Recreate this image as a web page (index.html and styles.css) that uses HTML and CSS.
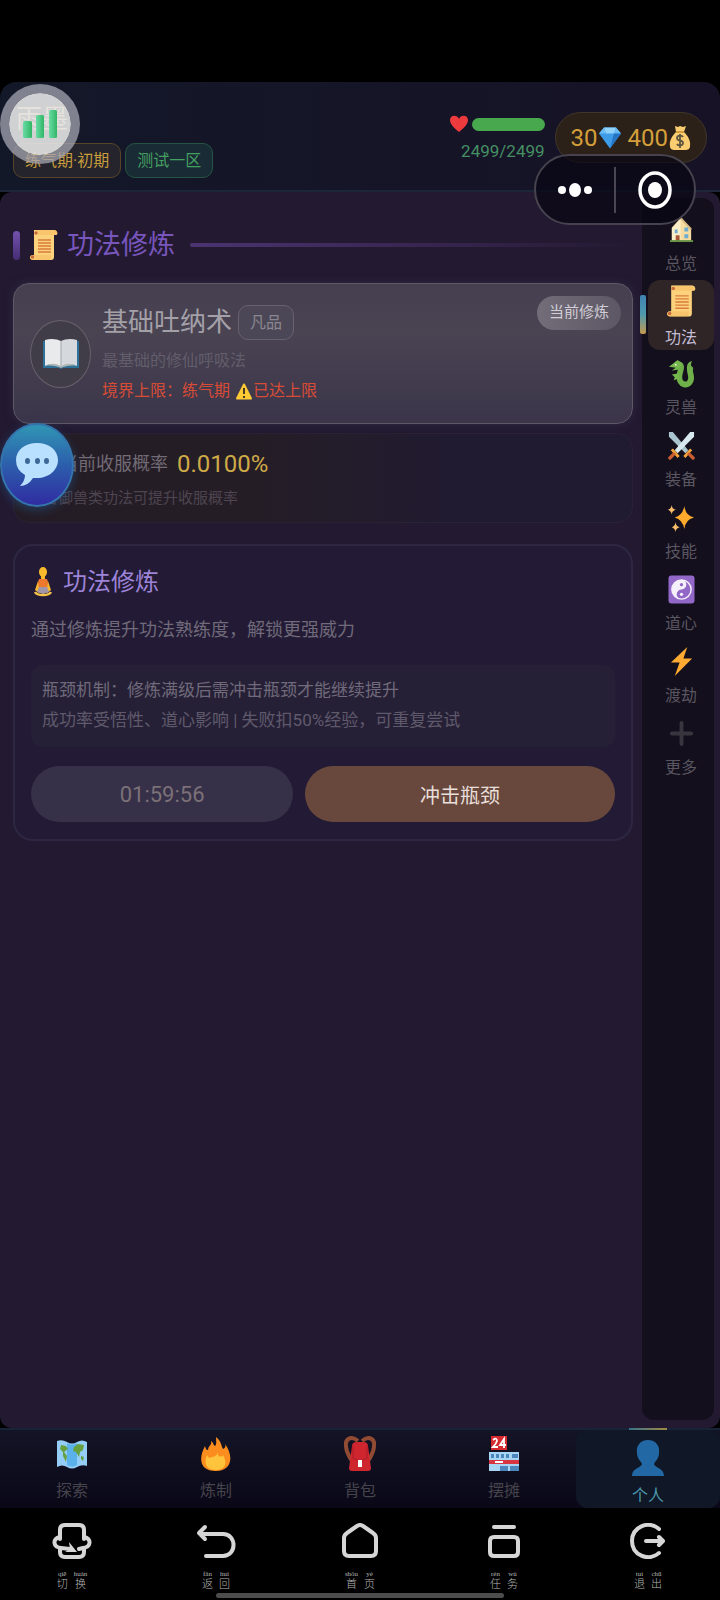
FILE: index.html
```
<!DOCTYPE html>
<html lang="zh-CN">
<head>
    <meta charset="UTF-8">
    <meta name="viewport" content="width=device-width, initial-scale=1.0">
    <title>功法修炼</title>
    <link rel="stylesheet" href="styles.css">
</head>
<body>
    <svg class="sprite" aria-hidden="true">
        <symbol id="scroll" viewBox="0 0 29 32">
            <path fill="#fcd27c" d="M5 1h20c4 0 4 5 2 5h-2v22c0 2-1 3-3 3H4c-4 0-4-5 0-5h1z"/>
            <path fill="#f5b75c" d="M5 1c3 0 4 2 4 5h18c2 0 2-5-2-5zM4 26h18c0 3 0 5-2 5H4c-4 0-4-5 0-5z" opacity=".5"/>
            <path stroke="#d97c3c" stroke-width="1.3" d="M9 11h13M9 14h13M9 17h13M9 20h13M9 23h13"/>
            <circle cx="7" cy="4" r="1.7" fill="#c96a3c"/>
            <circle cx="3.5" cy="28" r="1.7" fill="#c96a3c"/>
        </symbol>
    </svg>

    <div class="status-bar"></div>

    <header class="header">
        <div class="player">
            <div class="player-name">雨墨</div>
            <div class="tags">
                <span class="tag tag-realm">练气期·初期</span>
                <span class="tag tag-server">测试一区</span>
            </div>
        </div>
        <div class="stats">
            <div class="hp">
                <div class="hp-row">
                    <svg class="heart" viewBox="0 0 18 18"><path fill="#ed3b3d" d="M9 17C4 13 0 9 0 5c0-5 7-6 9-1 2-5 9-4 9 1 0 4-4 8-9 12z"/></svg>
                    <div class="hp-bar"></div>
                </div>
                <div class="hp-text">2499/2499</div>
            </div>
            <div class="wallet">
                <span>30</span>
                <svg class="gem" viewBox="0 0 22 22">
                    <path fill="#3d9be8" d="M5 1h12l5 6-11 15L0 7z"/>
                    <path fill="#91d2fb" d="M5 1h12l-2 6H7z"/>
                    <path fill="#6bbcf5" d="M5 1 0 7h7zM17 1l5 6h-7z"/>
                    <path fill="#2675c5" d="M15 7h7L11 22z"/>
                </svg>
                <span>400</span>
                <svg class="bag" viewBox="0 0 22 26">
                    <path fill="#f9cd70" d="M6 1l3 1 2-1 3 1 3-1-2 6c4 4 7 9 6 14 0 3-2 4-5 4H6c-3 0-5-1-5-4-1-5 2-10 6-14z"/>
                    <path stroke="#c98a32" stroke-width="1.5" d="M7 7h8"/>
                    <path fill="none" stroke="#5d5540" stroke-width="1.8" d="M14 12c-1-2-6-2-6 1 0 4 6 1 6 5 0 3-5 3-6 1M11 9v14"/>
                </svg>
            </div>
        </div>
    </header>

    <div class="body">
        <main class="main">
            <h1 class="page-title">
                <svg viewBox="0 0 29 32"><use href="#scroll"/></svg>
                功法修炼
            </h1>

            <section class="skill-card">
                <div class="skill-icon">
                    <svg viewBox="0 0 38 31">
                        <path fill="#2d7198" d="M1 3h36v27H21l-2 1-2-1H1z"/>
                        <path fill="#e9eaec" d="M3 2c6-2 12-1 16 1v26c-4-3-11-3-16-1z"/>
                        <path fill="#d5d8dd" d="M35 2c-6-2-12-1-16 1v26c4-3 11-3 16-1z"/>
                        <path stroke="#a3a6ad" d="M19 3v26"/>
                        <path fill="#aeb5b3" d="M3 28c5-3 12-3 16 1 4-4 11-4 16-1-5-1-12 0-16 2-4-2-11-3-16-2z"/>
                    </svg>
                </div>
                <div class="skill-info">
                    <div class="skill-head">
                        <h2>基础吐纳术</h2>
                        <span class="grade">凡品</span>
                    </div>
                    <p class="skill-desc">最基础的修仙呼吸法</p>
                    <p class="skill-limit">境界上限：练气期
                        <svg viewBox="0 0 16 17"><path fill="#fdca35" stroke="#fdca35" stroke-linejoin="round" stroke-width="2" d="M8 1.5 15 15.5H1z"/><path stroke="#4a3a25" stroke-width="2" d="M8 5v6M8 13v2"/></svg>已达上限</p>
                </div>
                <span class="current">当前修炼</span>
            </section>

            <section class="rate-card">
                <p class="rate">当前收服概率 <strong>0.0100%</strong></p>
                <p class="rate-tip">装备御兽类功法可提升收服概率</p>
            </section>

            <section class="train-card">
                <h2>
                    <svg viewBox="0 0 18 30">
                        <ellipse cx="9" cy="5" rx="4" ry="5" fill="#f8b92d"/>
                        <path fill="#f8b92d" d="M7 8h4v5H7zM4 14 1 23l4 3 2-4zM14 14l3 9-4 3-2-4z"/>
                        <path fill="#ed782e" d="M5 12h8l1 3-1 7H5l-1-7z"/>
                        <path fill="#a196a7" d="M5 20h8l2 5-6 2-6-2z"/>
                        <path fill="none" stroke="#f5c34a" stroke-width="2.5" d="M1 25c2 4 14 4 16 0"/>
                    </svg>
                    功法修炼
                </h2>
                <p class="train-desc">通过修炼提升功法熟练度，解锁更强威力</p>
                <div class="note">
                    <p class="note-main">瓶颈机制：修炼满级后需冲击瓶颈才能继续提升</p>
                    <p>成功率受悟性、道心影响 | 失败扣50%经验，可重复尝试</p>
                </div>
                <div class="actions">
                    <button class="btn btn-timer" type="button">01:59:56</button>
                    <button class="btn btn-break" type="button">冲击瓶颈</button>
                </div>
            </section>
        </main>

        <nav class="side">
            <a class="side-item" href="#">
                <svg viewBox="0 0 28 28">
                    <path fill="#f5dda1" d="M4 12 13 2l11 11v13H4z"/>
                    <path fill="#fbeec9" d="M4 13 13 3v23H4z"/>
                    <path fill="none" stroke="#d9b984" stroke-width="2" d="m13 2 11 12"/>
                    <path fill="#6dacd0" d="M7 14h3v4H7zM17 12h4v4h-4zM17 19h4v4h-4z"/>
                    <path fill="#a65635" d="M8 20h4v6H8z"/>
                    <path stroke="#679346" stroke-width="2" d="M2 26h24"/>
                </svg>
                <span>总览</span>
            </a>
            <a class="side-item active" href="#">
                <svg viewBox="0 0 29 32"><use href="#scroll"/></svg>
                <span>功法</span>
            </a>
            <a class="side-item" href="#">
                <svg viewBox="0 0 28 30">
                    <path fill="none" stroke="#6fb04a" stroke-width="6" stroke-linecap="round" d="M10 5c6 1 3 6 2 11-2 12 11 14 12 4 0-5-2-7-1-10"/>
                    <path fill="#6fb04a" d="M20 12c-1-5 0-9 5-10-2 4-1 6 1 10z"/>
                    <path fill="#75b84e" d="M1 8 5 5l5-4 5 4-5 6-6 1 4-3zM10 15l-6 1 3 3-1 3 6-2z"/>
                    <circle cx="8" cy="6" r="1" fill="#eef8d0"/>
                </svg>
                <span>灵兽</span>
            </a>
            <a class="side-item" href="#">
                <svg viewBox="0 0 28 30">
                    <path fill="#a9c4cf" d="M1 1h4l16 19-3 3L1 6z"/>
                    <path fill="#d8e8ef" d="M27 1h-4L7 20l3 3L27 6z"/>
                    <path fill="none" stroke="#f3a43a" stroke-width="3" d="m4 19 7 8M24 19l-7 8"/>
                    <path fill="none" stroke="#c95e32" stroke-width="3.5" stroke-linecap="round" d="m6 24-4 4M22 24l4 4"/>
                </svg>
                <span>装备</span>
            </a>
            <a class="side-item" href="#">
                <svg viewBox="0 0 28 30">
                    <path fill="#fdaa2d" d="M17 3q1 10 10 12-9 2-10 12-2-10-10-12 8-2 10-12z"/>
                    <path fill="#f8bd6a" d="M4 2q0 4 4 5-4 1-4 5-1-4-4-5 3-1 4-5zM8 20q0 4 4 5-4 1-4 5-1-4-4-5 3-1 4-5z"/>
                </svg>
                <span>技能</span>
            </a>
            <a class="side-item" href="#">
                <svg viewBox="0 0 28 30">
                    <rect width="27" height="29" x=".5" y=".5" fill="#9167c8" rx="3"/>
                    <circle cx="14" cy="15" r="10" fill="#9167c8" stroke="#f6f0fa" stroke-width="1.5"/>
                    <path fill="#f6f0fa" d="M14 5a5 5 0 0 1 0 10 5 5 0 0 0 0 10A10 10 0 0 1 14 5z"/>
                    <circle cx="14" cy="10" r="1.7" fill="#9167c8"/>
                    <circle cx="14" cy="20" r="1.7" fill="#f6f0fa"/>
                </svg>
                <span>道心</span>
            </a>
            <a class="side-item" href="#">
                <svg viewBox="0 0 28 30"><path fill="#fcaa31" d="M20 0 3 16h9L7 30l18-18h-9z"/></svg>
                <span>渡劫</span>
            </a>
            <a class="side-item" href="#">
                <svg viewBox="0 0 28 30"><path stroke="#38353f" stroke-width="4" stroke-linecap="round" d="M4 15h20M14 4v22"/></svg>
                <span>更多</span>
            </a>
        </nav>
    </div>

    <nav class="tabs">
        <a class="tab" href="#">
            <svg viewBox="0 0 32 32">
                <path fill="#94cef6" d="M1 3q5-2 10 1 5 3 10 0t10 0v24q-5-2-10 1-5 3-10 0t-10 0z"/>
                <path fill="#5bb2ea" d="M11 5q5 3 10 0v22q-5 3-10 0z"/>
                <path fill="#67a13e" d="m5 7 5 1 2 3-4 3 3 4-1 6-3-6 0-4-3-3zM18 9l4-3 6 1-1 5-3 2-1 5-3-5-3-1zM25 18l3 1-1 4-2-2z"/>
            </svg>
            <span>探索</span>
        </a>
        <a class="tab" href="#">
            <svg viewBox="0 0 32 36">
                <path fill="#fb8d1e" d="M16 1c6 5 5 9 7 12 2-1 3-2 2-5 9 12 7 27-9 27S-2 23 5 10c1 3 1 4 3 4 1-6 4-4 3-9 3 2 2 4 4 5 2-2 1-5 1-9z"/>
                <path fill="#ffc43c" d="M18 16c-1 6 5 5 5 3 5 8 2 15-7 15S3 28 7 19c2 4 4 3 4 2 4 0 6-2 7-5z"/>
            </svg>
            <span>炼制</span>
        </a>
        <a class="tab" href="#">
            <svg viewBox="0 0 32 36">
                <path fill="none" stroke="#924b33" stroke-width="4" d="M14 5C7-1 1 3 2 10c0 6 3 9 5 14M18 5c7-6 13-2 12 5 0 6-3 9-5 14"/>
                <path fill="#cf252e" d="M8 10q0-4 5-4h6q5 0 5 4l3 22q0 3-3 3H8q-3 0-3-3z"/>
                <path fill="none" stroke="#a91e29" d="M9 10v12q7 5 14 0V10"/>
                <path fill="#fff" d="M14 24h4v7h-4z"/>
            </svg>
            <span>背包</span>
        </a>
        <a class="tab" href="#">
            <svg viewBox="0 0 32 36">
                <path fill="#d62a31" d="M3 0h16v14H3z"/>
                <path fill="none" stroke="#fff" stroke-width="1.8" d="M5 4q4-3 4 1-1 3-4 6h5M16 12V3l-4 6h6"/>
                <path fill="#a8d5f3" d="M1 16h30v19H1z"/>
                <path fill="#4b86bd" d="M3 18h3v4H3zM8 18h3v4H8zM13 18h3v4h-3zM18 18h3v4h-3zM24 18h6v4h-6zM12 30h8v5h-8zM22 30h9v5h-9z"/>
                <path stroke="#d73641" stroke-width="4" d="M1 26h30"/>
                <path stroke="#fff" stroke-width="2" d="M7 26h8"/>
            </svg>
            <span>摆摊</span>
        </a>
        <a class="tab active" href="#">
            <svg viewBox="0 0 32 36"><path fill="#2268a5" d="M16 0c8 0 12 6 11 13 0 6-4 8-5 11 1 4 10 4 10 12H0c0-8 9-8 10-12-1-3-5-5-5-11C4 6 8 0 16 0z"/></svg>
            <span>个人</span>
        </a>
    </nav>

    <nav class="system">
        <button type="button">
            <svg viewBox="0 0 40 36"><path d="M8 16V7q0-5 5-5h14q5 0 5 5v9M8 14c-8 2-7 10 1 11l9 1M32 14c8 2 7 10-1 11l-4 1M8 26v3q0 5 5 5h14q5 0 5-5v-3"/><path class="solid" d="m17 19 8 10H13l5-3z"/></svg>
            <ruby>切<rt>qiē</rt></ruby><ruby>换<rt>huàn</rt></ruby>
        </button>
        <button type="button">
            <svg viewBox="0 0 40 36"><path d="M9 4 3 10l6 6M4 11h23c14 0 14 22 0 22H10"/></svg>
            <ruby>返<rt>fǎn</rt></ruby><ruby>回<rt>huí</rt></ruby>
        </button>
        <button type="button">
            <svg viewBox="0 0 40 36"><path d="M4 15q0-3 3-5L17 3q3-2 6 0l10 7q3 2 3 5v13q0 5-5 5H9q-5 0-5-5z"/></svg>
            <ruby>首<rt>shǒu</rt></ruby><ruby>页<rt>yè</rt></ruby>
        </button>
        <button type="button">
            <svg viewBox="0 0 40 36"><path d="M10 4h20M10 14h20q4 0 4 4v11q0 4-4 4H10q-4 0-4-4V18q0-4 4-4z"/></svg>
            <ruby>任<rt>rèn</rt></ruby><ruby>务<rt>wù</rt></ruby>
        </button>
        <button type="button">
            <svg viewBox="0 0 40 36"><path d="M31 6C20-3 4 4 4 18s16 21 27 12M18 18h16M31 14l4 4-4 4"/></svg>
            <ruby>退<rt>tuì</rt></ruby><ruby>出<rt>chū</rt></ruby>
        </button>
    </nav>

    <!-- 悬浮按钮 -->
    <button class="float signal" type="button" aria-label="网络">
        <svg viewBox="0 0 34 28">
            <defs><linearGradient id="bars" x2="1"><stop stop-color="#69dba5"/><stop offset="1" stop-color="#30b665"/></linearGradient></defs>
            <rect y="11" width="9" height="17" rx="1.5" fill="url(#bars)"/>
            <rect x="13" y="5" width="8" height="23" rx="1.5" fill="url(#bars)"/>
            <rect x="26" width="8" height="28" rx="1.5" fill="url(#bars)"/>
        </svg>
    </button>
    <button class="float chat" type="button" aria-label="聊天">
        <svg viewBox="0 0 42 44">
            <path fill="#b9e0ff" d="M21 0c12 0 21 7 21 17s-9 18-21 18h-4Q12 43 4 43q5-5 5-11-9-5-9-15C0 7 9 0 21 0z"/>
            <path fill="#3d6796" d="M9 18a2.5 3 0 1 1 5 0 2.5 3 0 1 1-5 0zM19 18a2.5 3 0 1 1 5 0 2.5 3 0 1 1-5 0zM28 18a2.5 3 0 1 1 5 0 2.5 3 0 1 1-5 0z"/>
        </svg>
    </button>
    <div class="float capsule">
        <button type="button" aria-label="更多">
            <svg viewBox="0 0 36 16"><g fill="#fff"><ellipse cx="5" cy="8" rx="4" ry="4"/><ellipse cx="18" cy="8" rx="6" ry="7"/><ellipse cx="31" cy="8" rx="4" ry="4"/></g></svg>
        </button>
        <button type="button" aria-label="关闭">
            <svg viewBox="0 0 36 40"><ellipse cx="18" cy="20" rx="15" ry="17" fill="none" stroke="#fff" stroke-width="3.5"/><ellipse cx="18" cy="20" rx="7" ry="8" fill="#fff"/></svg>
        </button>
    </div>
</body>
</html>
```
FILE: styles.css
```
* {
    box-sizing: border-box;
}
body {
    margin: 0;
    min-height: 100vh;
    display: flex;
    flex-direction: column;
    position: relative;
    background-color: #000;
    color: #85818b;
    font-family: Roboto, "Noto Sans CJK SC", sans-serif;
    font-size: 16px;
    font-weight: 400;
}
h1, h2, p {
    margin: 0;
    font-weight: 400;
}
a {
    color: inherit;
    text-decoration: none;
}
button {
    padding: 0;
    border: none;
    background: none;
    color: inherit;
    font: inherit;
    cursor: pointer;
}
svg {
    display: block;
    flex: none;
}
.sprite {
    position: absolute;
    width: 0;
    height: 0;
}
.status-bar {
    height: 82px;
}

/* 顶部 */
.header {
    display: flex;
    justify-content: space-between;
    height: 110px;
    padding: 18px 13px 0;
    border-bottom: 2px solid #1d2539;
    border-radius: 16px 16px 0 0;
    background: linear-gradient(90deg, #131829, #171226);
}
.player-name {
    padding-left: 3px;
    color: #e5c98c;
    font-size: 26px;
    line-height: 38px;
}
.tags {
    display: flex;
    gap: 4px;
    margin-top: 5px;
}
.tag {
    padding: 0 11px;
    border: 1px solid;
    border-radius: 10px;
    line-height: 33px;
}
.tag-realm {
    border-color: #584529;
    background-color: #25242c;
    color: #c69c3c;
}
.tag-server {
    border-color: #255542;
    background-color: #192b34;
    color: #459f61;
}
.stats {
    display: flex;
    align-items: flex-start;
    gap: 10px;
}
.hp {
    padding-top: 15px;
}
.hp-row {
    display: flex;
    align-items: center;
    justify-content: flex-end;
    gap: 4px;
}
.heart {
    width: 18px;
    height: 18px;
}
.hp-bar {
    width: 73px;
    height: 13px;
    border-radius: 7px;
    background-color: #48a84d;
}
.hp-text {
    margin-top: 6px;
    color: #458f62;
    font-size: 17px;
    text-align: right;
    line-height: 24px;
}
.wallet {
    display: flex;
    align-items: center;
    height: 51px;
    margin-top: 12px;
    padding: 0 15px;
    border: 1px solid #40372a;
    border-radius: 26px;
    background-color: #2b2119;
    color: #d49f39;
    font-size: 24px;
}
.gem {
    width: 22px;
    height: 23px;
    margin: 0 7px 0 1px;
}
.bag {
    width: 22px;
    height: 26px;
    margin-left: 1px;
}

/* 内容 */
.body {
    flex: 1;
    display: flex;
    padding: 6px 6px 8px 13px;
    border-radius: 12px;
    background-color: #231a31;
}
.main {
    flex: 1;
    padding-right: 9px;
}
.page-title {
    display: flex;
    align-items: center;
    gap: 9px;
    height: 38px;
    margin: 28px 0 19px;
    color: #7856bd;
    font-size: 27px;
    line-height: 36px;
}
.page-title::before {
    content: "";
    width: 7px;
    height: 29px;
    border-radius: 4px;
    background: linear-gradient(#7352ae, #452d74);
}
.page-title::after {
    content: "";
    flex: 1;
    height: 4px;
    margin-left: 6px;
    border-radius: 2px;
    background: linear-gradient(90deg, #4b3471, #392652 50%, #231a31);
}
.page-title svg {
    width: 29px;
    height: 32px;
}
.skill-card {
    display: flex;
    gap: 11px;
    height: 141px;
    padding: 10px 11px 10px 16px;
    border: 1px solid #5f5967;
    border-radius: 16px;
    background: linear-gradient(#453f50, #494352 35%, #3b354a);
    box-shadow: 0 0 8px #302942;
}
.skill-icon {
    display: flex;
    align-items: center;
    justify-content: center;
    align-self: center;
    width: 61px;
    height: 68px;
    border: 1px solid #68616c;
    border-radius: 50%;
    background-color: #403c48;
}
.skill-icon svg {
    width: 38px;
    height: 31px;
}
.skill-info {
    flex: 1;
    padding-top: 10px;
}
.skill-head {
    display: flex;
    align-items: center;
    gap: 6px;
}
.skill-head h2 {
    color: #a3a0a8;
    font-size: 26px;
    line-height: 36px;
}
.grade {
    padding: 0 11px;
    border: 1px solid #67626e;
    border-radius: 10px;
    background-color: #4c4756;
    color: #8a8791;
    line-height: 33px;
}
.skill-desc {
    margin-top: 8px;
    color: #625d6a;
    line-height: 26px;
}
.skill-limit {
    display: flex;
    align-items: center;
    margin-top: 4px;
    color: #d84c36;
    line-height: 26px;
}
.skill-limit svg {
    width: 16px;
    height: 17px;
    margin: 0 1px 0 6px;
}
.current {
    height: 34px;
    margin-top: 2px;
    padding: 0 12px;
    border-radius: 17px;
    background: linear-gradient(90deg, #726d79, #5d5765);
    color: #d1cdd5;
    font-size: 15px;
    line-height: 32px;
}
.rate-card {
    height: 90px;
    margin-top: 9px;
    padding: 13px 14px 0;
    border: 1px solid #2a2134;
    border-radius: 16px;
    background: linear-gradient(90deg, #251d26, #251d26 40%, #211b31 70%);
}
.rate {
    display: flex;
    align-items: center;
    gap: 9px;
    padding-left: 32px;
    color: #716b75;
    font-size: 18px;
    line-height: 34px;
}
.rate strong {
    color: #cfab47;
    font-size: 24px;
    font-weight: 400;
}
.rate-tip {
    color: #4d4550;
    font-size: 15px;
    line-height: 34px;
}
.train-card {
    margin-top: 21px;
    padding: 18px 16px 17px;
    border: 2px solid #2d2744;
    border-radius: 20px;
    background-color: #231b35;
}
.train-card h2 {
    display: flex;
    align-items: center;
    gap: 11px;
    padding-left: 3px;
    color: #9d84d8;
    font-size: 24px;
    line-height: 36px;
}
.train-card h2 svg {
    width: 18px;
    height: 30px;
}
.train-desc {
    margin-top: 14px;
    color: #706a7a;
    font-size: 18px;
    line-height: 32px;
}
.note {
    margin-top: 19px;
    padding: 10px 11px 12px;
    border-radius: 12px;
    background-color: #262037;
    color: #5f5a6b;
    font-size: 17px;
    line-height: 30px;
}
.note-main {
    color: #706a7a;
}
.actions {
    display: flex;
    gap: 12px;
    margin-top: 19px;
}
.btn {
    height: 56px;
    border-radius: 28px;
    font-size: 20px;
}
.btn-timer {
    flex: 11;
    background-color: #373049;
    color: #7b7177;
    font-size: 22px;
}
.btn-break {
    flex: 13;
    background-color: #68483c;
    color: #e9dfda;
}

/* 侧边菜单 */
.side {
    display: flex;
    flex-direction: column;
    gap: 2px;
    width: 72px;
    padding: 10px 0 0 6px;
    border-radius: 12px;
    background-color: #130f1c;
}
.side-item {
    display: flex;
    flex-direction: column;
    align-items: center;
    gap: 6px;
    height: 70px;
    padding-top: 7px;
    border-radius: 12px;
    color: #5a5661;
    line-height: 28px;
}
.side-item svg {
    width: 27px;
    height: 29px;
}
.side-item.active {
    position: relative;
    padding-top: 4px;
    background-color: #2f2526;
    color: #c2bcd6;
}
.side-item.active svg {
    width: 30px;
    height: 34px;
}
.side-item.active::before {
    content: "";
    position: absolute;
    top: 15px;
    left: -8px;
    width: 6px;
    height: 39px;
    border-radius: 2px;
    background: linear-gradient(#3f83b3, #4f99ad 50%, #c49a50);
}

/* 底部菜单 */
.tabs {
    display: flex;
    height: 80px;
    border-top: 2px solid #172337;
    background: linear-gradient(#131426, #0a0817);
}
.tab {
    flex: 1;
    display: flex;
    flex-direction: column;
    align-items: center;
    gap: 7px;
    padding-top: 6px;
    color: #46444c;
    line-height: 24px;
}
.tab svg {
    width: 32px;
    height: 36px;
}
.tab.active {
    position: relative;
    gap: 8px;
    padding-top: 10px;
    border-radius: 12px;
    background-color: #101827;
    color: #4b98ac;
}
.tab.active::before {
    content: "";
    position: absolute;
    top: -2px;
    left: 50%;
    width: 38px;
    height: 2px;
    margin-left: -19px;
    background: linear-gradient(90deg, #36728a, #a38a45);
}

/* 系统按键 */
.system {
    display: flex;
    position: relative;
    height: 92px;
}
.system button {
    flex: 1;
    padding-top: 6px;
    color: #b5b5b5;
    font-size: 11px;
    font-weight: 300;
    line-height: 14px;
}
.system svg {
    width: 40px;
    height: 36px;
    margin: 0 auto 11px;
    fill: none;
    stroke: #d6d6d6;
    stroke-width: 4;
    stroke-linecap: round;
    stroke-linejoin: round;
}
.system .solid {
    fill: #d6d6d6;
    stroke: none;
}
.system ruby {
    margin: 0 3px;
}
.system rt {
    font-family: "Liberation Serif", serif;
    font-size: 7px;
}
.system::after {
    content: "";
    position: absolute;
    left: 30%;
    right: 30%;
    bottom: 2px;
    height: 5px;
    border-radius: 3px;
    background-color: #4d4d4d;
}

/* 悬浮层 */
.float {
    position: absolute;
    display: flex;
    align-items: center;
    justify-content: center;
}
.signal {
    top: 84px;
    left: 0;
    width: 80px;
    height: 80px;
    border: 9px solid rgba(165, 165, 178, 0.75);
    border-radius: 50%;
    background-color: rgba(230, 230, 230, 0.9);
    background-clip: padding-box;
}
.signal svg {
    width: 34px;
    height: 28px;
}
.chat {
    top: 423px;
    left: 0;
    width: 74px;
    height: 84px;
    border: 2px solid #3474ad;
    border-radius: 50%;
    background: linear-gradient(#3095b4, #2c5eac 50%, #302ca1);
    box-shadow: 0 3px 10px rgba(35, 90, 150, 0.5);
}
.chat svg {
    width: 42px;
    height: 44px;
}
.capsule {
    top: 154px;
    right: 24px;
    width: 162px;
    height: 71px;
    border: 2px solid #47434e;
    border-radius: 36px;
    background-color: rgba(8, 6, 18, 0.7);
}
.capsule button {
    flex: 1;
    display: flex;
    align-items: center;
    justify-content: center;
    height: 46px;
}
.capsule button + button {
    border-left: 2px solid #4a4652;
}
.capsule svg {
    width: 36px;
}
```
